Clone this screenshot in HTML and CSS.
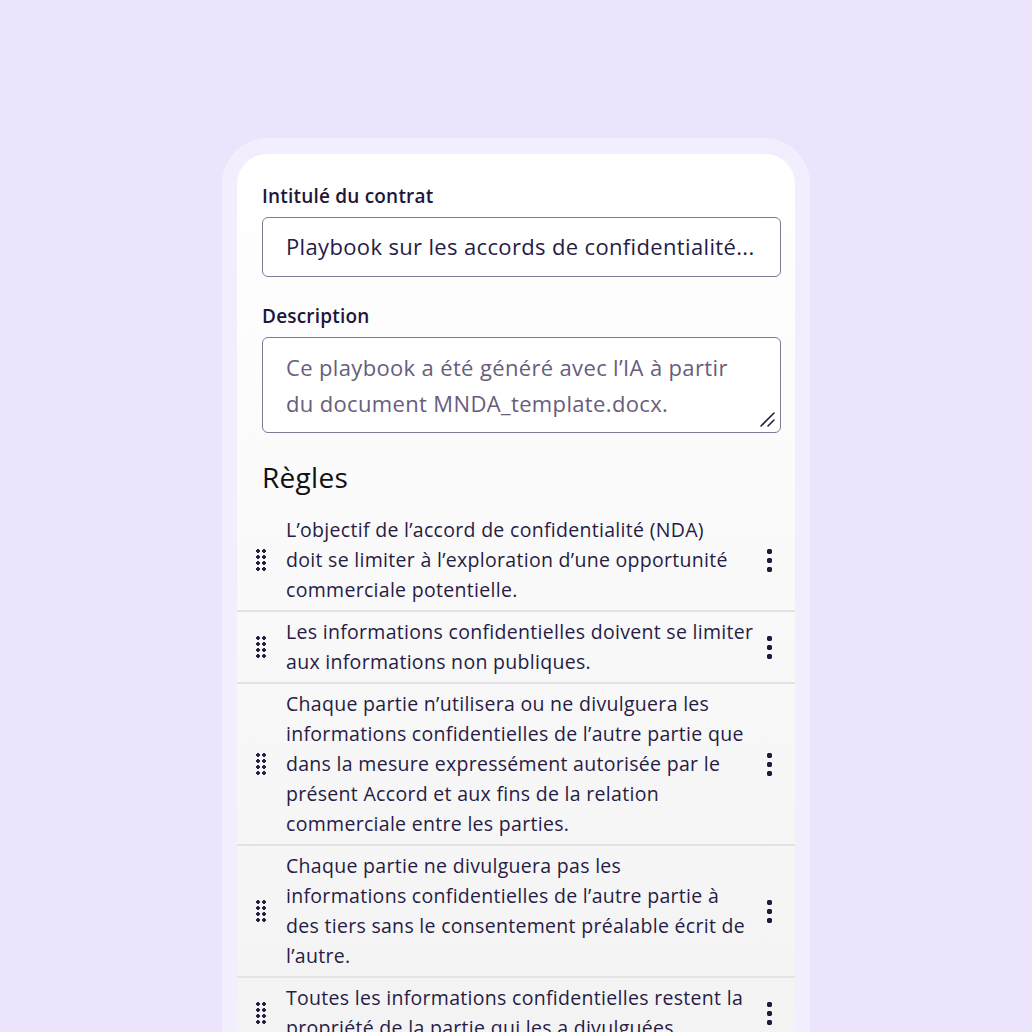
FILE: index.html
```html
<!DOCTYPE html>
<html lang="fr">
<head>
    <meta charset="UTF-8">
    <title>Playbook</title>
    <link rel="stylesheet" href="styles.css">
</head>
<body>
    <div class="frame">
        <div class="card">
            <div class="field">
                <label class="label">Intitulé du contrat</label>
                <div class="input">Playbook sur les accords de confidentialité...</div>
            </div>
            <div class="field">
                <label class="label">Description</label>
                <div class="textarea">
                    Ce playbook a été généré avec l’IA à partir du document MNDA_template.docx.
                    <svg class="resize" width="18" height="18" viewBox="0 0 18 18"><path d="M3 16L16 3M10 16L16 10" stroke="#2a1f45" stroke-width="1.6" stroke-linecap="round"/></svg>
                </div>
            </div>

            <h2 class="section-title">Règles</h2>

            <div class="rules">
                <div class="rule">
                    <span class="handle"></span>
                    <p>L’objectif de l’accord de confidentialité (NDA) doit&nbsp;se limiter à l’exploration d’une opportunité commerciale potentielle.</p>
                    <span class="kebab"></span>
                </div>
                <div class="rule">
                    <span class="handle"></span>
                    <p>Les informations confidentielles doivent se limiter aux informations non publiques.</p>
                    <span class="kebab"></span>
                </div>
                <div class="rule">
                    <span class="handle"></span>
                    <p>Chaque partie n’utilisera ou ne divulguera les informations confidentielles de l’autre partie que dans la mesure expressément autorisée par le présent Accord et aux fins de la relation commerciale entre les parties.</p>
                    <span class="kebab"></span>
                </div>
                <div class="rule">
                    <span class="handle"></span>
                    <p>Chaque partie ne divulguera pas les informations&nbsp;confidentielles de l’autre partie à des tiers sans le consentement préalable écrit de l’autre.</p>
                    <span class="kebab"></span>
                </div>
                <div class="rule">
                    <span class="handle"></span>
                    <p>Toutes les informations confidentielles restent la propriété de la partie qui les a divulguées.</p>
                    <span class="kebab"></span>
                </div>
            </div>
        </div>
    </div>
</body>
</html>
```

FILE: styles.css
```css
html, body {
    height: 100%;
}
body {
    margin: 0;
    overflow: hidden;
    background: #ebe4fc;
    font-family: 'Open Sans', 'Noto Sans', sans-serif;
    color: #271c44;
}
.frame {
    width: 588px;
    margin: 138px auto 0;
    padding: 16px 15px 0;
    box-sizing: border-box;
    background: #f2eefd;
    border-radius: 46px 46px 0 0;
    height: 1000px;
}
.card {
    background: linear-gradient(#ffffff 0%, #f1f1f2 100%);
    border-radius: 30px 30px 0 0;
    padding: 30px 14px 0 25px;
    height: 1000px;
}
.field {
    margin-bottom: 27px;
}
.label {
    display: block;
    font-size: 19px;
    font-weight: 600;
    letter-spacing: 0.2px;
    line-height: 24px;
    margin-bottom: 9px;
    color: #21163a;
}
.input,
.textarea {
    border: 1.5px solid #817895;
    border-radius: 6px;
    background: #fff;
    font-size: 22px;
    letter-spacing: 0.35px;
    padding: 0 23px;
    box-sizing: border-box;
}
.input {
    height: 60px;
    line-height: 57px;
    white-space: nowrap;
    overflow: hidden;
}
.textarea {
    position: relative;
    line-height: 36px;
    padding-top: 11px;
    height: 96px;
    color: #685d7d;
}
.resize {
    position: absolute;
    right: 4px;
    bottom: 4px;
}
.section-title {
    font-size: 28px;
    font-weight: 400;
    letter-spacing: 0.3px;
    color: #111;
    margin: 0 0 16px;
    line-height: 34px;
}
.rules {
    margin: 0 -14px 0 -25px;
}
.rule {
    display: flex;
    align-items: center;
    border-bottom: 2px solid #e3e3e6;
    padding: 5px 0;
}
.rule p {
    margin: 0;
    flex: 1;
    font-size: 19.5px;
    letter-spacing: 0.3px;
    line-height: 30px;
}
.handle {
    width: 49px;
    height: 24px;
    flex: none;
    background-image: radial-gradient(circle, #2a1f45 1.6px, transparent 2px);
    background-size: 6px 6px;
    background-repeat: repeat;
    background-position: 18px 0;
    background-clip: content-box;
    box-sizing: border-box;
    padding: 0 19px 0 18px;
}
.kebab {
    width: 41px;
    height: 26px;
    flex: none;
    background-image: radial-gradient(circle, #241a3d 2.6px, transparent 3px);
    background-size: 31px 9px;
    background-position: 0 0;
    background-repeat: repeat-y;
}
```
